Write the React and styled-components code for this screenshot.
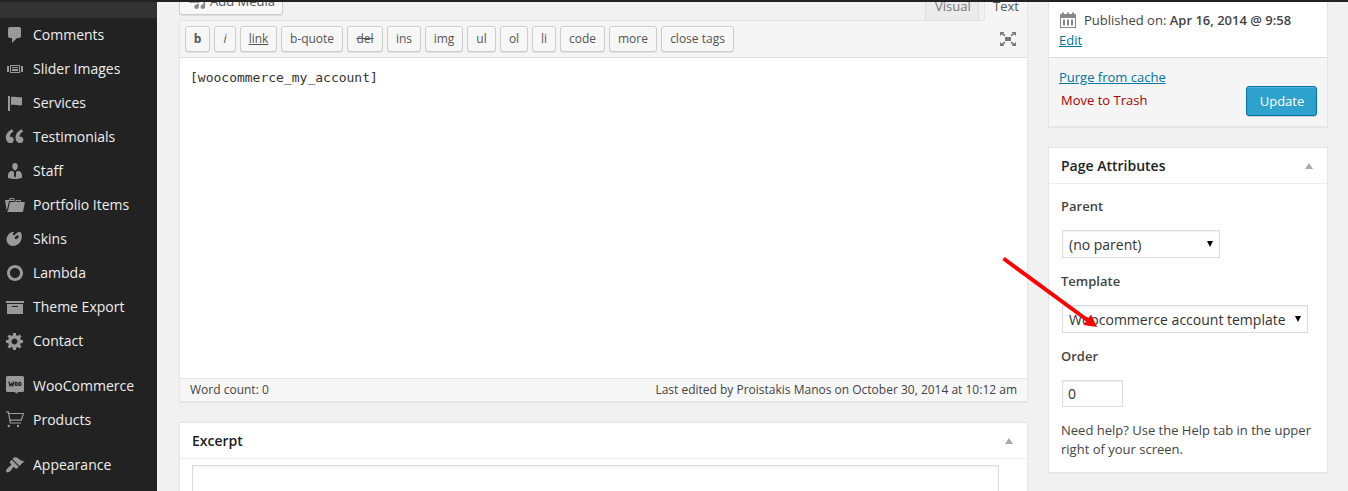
import React from "react";
import styled, { createGlobalStyle } from "styled-components";

const GlobalStyle = createGlobalStyle`
  *, *::before, *::after { box-sizing: border-box; }
  html, body { margin: 0; height: 491px; overflow: hidden; background: #f1f1f1; }
  body { font-family: "Open Sans", sans-serif; font-size: 13px; color: #444; }
`;

const Page = styled.div`
  display: flex;
  flex-direction: column;
  width: 1348px;
  height: 491px;
  overflow: hidden;
  position: relative;
`;
const AdminBar = styled.div`
  height: 2px;
  flex: none;
  background: #222;
`;
const Body = styled.div`
  display: flex;
  flex: 1;
  min-height: 0;
`;

/* Sidebar */
const Sidebar = styled.nav`
  width: 157px;
  flex: none;
  background: #222;
`;
const CurrentBand = styled.div`
  height: 16px;
  background: #333;
`;
const MenuItem = styled.a`
  display: flex;
  align-items: center;
  height: 34px;
  padding-left: 5px;
  gap: 8px;
  margin-top: ${(p) => (p.$gap ? 11 : 0)}px;
  font-size: 14px;
  line-height: 18px;
  color: #eee;
  white-space: nowrap;
`;
const Icon = styled.svg`
  display: block;
  flex: none;
  width: ${(p) => p.$size || 20}px;
  height: ${(p) => p.$size || 20}px;
  fill: ${(p) => p.$color || "#999"};
`;

/* Columns */
const Main = styled.main`
  width: 849px;
  margin-left: 22px;
  flex: none;
`;
const Side = styled.aside`
  width: 280px;
  margin-left: 20px;
  flex: none;
`;

/* Editor */
const EditorTools = styled.div`
  display: flex;
  align-items: flex-start;
  justify-content: space-between;
  height: 18px;
`;
const Clip = styled.div`
  display: flex;
  align-items: flex-end;
  height: 14px;
  overflow: hidden;
`;
const MediaButton = styled.button`
  display: flex;
  flex: none;
  align-items: center;
  gap: 4px;
  width: 104px;
  height: 28px;
  margin-bottom: 1px;
  padding: 0 0 0 8px;
  border: 1px solid #ccc;
  border-radius: 3px;
  background: #f7f7f7;
  box-shadow: inset 0 1px 0 #fff, 0 1px 0 rgba(0, 0, 0, 0.08);
  font: 13px/26px "Open Sans", sans-serif;
  color: #555;
  white-space: nowrap;
`;
const Tabs = styled.div`
  display: flex;
  align-items: flex-end;
  gap: 5px;
  height: 19px;
  overflow: hidden;
  position: relative;
`;
const Tab = styled.div`
  flex: none;
  width: ${(p) => p.$w}px;
  height: 29px;
  padding: 3px 0 0 ${(p) => (p.$active ? 8 : 9)}px;
  border: 1px solid ${(p) => (p.$active ? "#e5e5e5" : "#dedede")};
  border-bottom-color: ${(p) => (p.$active ? "#f5f5f5" : "#dedede")};
  background: ${(p) => (p.$active ? "#f5f5f5" : "#ebebeb")};
  color: ${(p) => (p.$active ? "#555" : "#777")};
  font-size: 13px;
  line-height: 20px;
`;
const Editor = styled.section`
  border: 1px solid #e5e5e5;
  height: 382px;
  display: flex;
  flex-direction: column;
  background: #fff;
  box-shadow: 0 1px 1px rgba(0, 0, 0, 0.04);
`;
const Toolbar = styled.div`
  display: flex;
  gap: 4px;
  height: 37px;
  padding: 5px 9px 0 5px;
  background: #f5f5f5;
  border-bottom: 1px solid #dedede;
`;
const TagButton = styled.button`
  width: ${(p) => p.$w}px;
  height: 26px;
  padding: 0;
  border: 1px solid #ccc;
  border-radius: 3px;
  background: #f7f7f7;
  box-shadow: inset 0 1px 0 #fff, 0 1px 0 rgba(0, 0, 0, 0.08);
  font-family: "Open Sans", sans-serif;
  font-size: 12px;
  line-height: 24px;
  color: #555;
  white-space: nowrap;
  font-weight: ${(p) => (p.$kind === "bold" ? 700 : 400)};
  font-style: ${(p) => (p.$kind === "italic" ? "italic" : "normal")};
  text-decoration: ${(p) =>
    p.$kind === "link" ? "underline" : p.$kind === "del" ? "line-through" : "none"};
`;
const Expand = styled.span`
  margin: 3px 0 0 auto;
`;
const CodeArea = styled.div`
  flex: 1;
  padding: 10px;
  font: 13px/20px "DejaVu Sans Mono", monospace;
  color: #333;
`;
const StatusBar = styled.div`
  display: flex;
  justify-content: space-between;
  height: 23px;
  padding: 0 10px;
  border-top: 1px solid #e5e5e5;
  background: #f7f7f7;
  font-size: 12px;
  line-height: 22px;
  color: #444;
`;

/* Panels */
const Panel = styled.section`
  margin-top: ${(p) => p.$mt || 0}px;
  height: ${(p) => p.$h}px;
  border: 1px solid #e5e5e5;
  border-top-width: ${(p) => (p.$cut ? 0 : 1)}px;
  background: #fff;
  box-shadow: 0 1px 1px rgba(0, 0, 0, 0.04);
`;
const PanelHead = styled.header`
  display: flex;
  align-items: center;
  justify-content: space-between;
  height: 36px;
  padding: 0 14px 0 12px;
  border-bottom: 1px solid #eee;
`;
const PanelTitle = styled.h3`
  margin: 0;
  font-size: 14px;
  line-height: 20px;
  font-weight: 600;
  color: #222;
`;
const Toggle = styled.span`
  margin-top: 1px;
  border: 4px solid transparent;
  border-top: 0;
  border-bottom: 6px solid #aaa;
`;
const ExcerptBox = styled.div`
  width: 807px;
  height: 60px;
  margin: 6px 0 0 12px;
  border: 1px solid #ddd;
  box-shadow: inset 0 1px 2px rgba(0, 0, 0, 0.07);
`;
const PublishInfo = styled.div`
  height: 56px;
  padding: 8px 0 0 10px;
  border-bottom: 1px solid #ddd;
  line-height: 20px;
`;
const Stamp = styled.div`
  display: flex;
  align-items: center;
  gap: 6px;
  height: 20px;
  margin-left: -1px;
  white-space: pre;
`;
const Strong = styled.b`
  font-weight: 600;
`;
const Link = styled.a`
  color: #0074a2;
  text-decoration: underline;
`;
const PublishActions = styled.div`
  display: flex;
  justify-content: space-between;
  height: 68px;
  padding: 9px 10px 0 10px;
  background: #f5f5f5;
`;
const ActionLinks = styled.div`
  display: flex;
  flex-direction: column;
  gap: 3px;
  line-height: 20px;
`;
const Trash = styled.a`
  margin-left: 2px;
  color: #a00;
`;
const Update = styled.button`
  width: 71px;
  height: 30px;
  margin-top: 19px;
  padding: 0 0 0 1px;
  border: 1px solid #0074a2;
  border-radius: 3px;
  background: #2ea2cc;
  box-shadow: inset 0 1px 0 rgba(120, 200, 230, 0.5), 0 1px 0 rgba(0, 0, 0, 0.15);
  font: 13px/28px "Open Sans", sans-serif;
  color: #fff;
`;
const Fields = styled.div`
  padding: 12px 12px 0;
`;
const Label = styled.div`
  height: 20px;
  line-height: 20px;
  font-weight: 600;
  margin-bottom: 14px;
`;
const Select = styled.div`
  display: flex;
  align-items: center;
  justify-content: space-between;
  width: ${(p) => p.$w}px;
  height: 28px;
  margin: 0 0 13px 1px;
  padding: 1px 6px 0;
  border: 1px solid #ddd;
  background: #fff;
  box-shadow: inset 0 1px 2px rgba(0, 0, 0, 0.07);
  font-size: 14px;
  line-height: 27px;
  color: #333;
  white-space: nowrap;
`;
const Caret = styled.i`
  margin-bottom: 2px;
  border: 3.5px solid transparent;
  border-bottom: 0;
  border-top: 6px solid #000;
`;
const OrderInput = styled.div`
  width: 61px;
  height: 27px;
  margin-left: 1px;
  padding-left: 5px;
  border: 1px solid #ddd;
  box-shadow: inset 0 1px 2px rgba(0, 0, 0, 0.07);
  font-size: 14px;
  line-height: 26px;
  color: #333;
`;
const Help = styled.p`
  margin: 14px 0 0;
  line-height: 19px;
  white-space: nowrap;
`;
const Pointer = styled.svg`
  position: absolute;
  left: 998px;
  top: 252px;
  width: 104px;
  height: 80px;
`;

const MENU = [
  { label: "Comments", d: "M5 2h9c1.1 0 2 .9 2 2v7c0 1.1-.9 2-2 2h-2l-5 5v-5H5c-1.1 0-2-.9-2-2V4c0-1.1.9-2 2-2z" },
  { label: "Slider Images", d: "M5 14V6h10v8H5zm-3-1V7h2v6H2zm4-6v6h8V7H6zm10 0h2v6h-2V7zm-3 2V8H7v1h6zm0 3v-2H7v2h6z" },
  { label: "Services", d: "M5 18V3H3v15h2zm1-6V4c3-1 7 1 11 0v8c-3 1.27-8-1-11 0z" },
  {
    label: "Testimonials",
    transform: "translate(-2.6 -2.2) scale(1.2 1.14)",
    d: "M9.49 13.22c0-.74-.2-1.38-.61-1.9-.62-.78-1.83-.88-2.53-.72-.29-1.65 1.11-3.75 2.92-4.65L7.88 4c-2.73 1.3-5.42 4.28-4.96 8.05C3.21 14.43 4.59 16 6.54 16c.85 0 1.56-.25 2.12-.75s.83-1.18.83-2.03zm8.05 0c0-.74-.2-1.38-.61-1.9-.63-.78-1.83-.88-2.53-.72-.29-1.65 1.11-3.75 2.92-4.65L15.93 4c-2.73 1.3-5.41 4.28-4.95 8.05.29 2.38 1.66 3.95 3.61 3.95.85 0 1.56-.25 2.12-.75s.83-1.18.83-2.03z",
  },
  {
    label: "Staff",
    d: "M7.3 6l-.03-.19c-.04-.37-.05-.73-.03-1.08.02-.36.1-.71.25-1.04.14-.32.31-.61.52-.86s.49-.46.83-.6c.34-.15.72-.23 1.13-.23.69 0 1.26.2 1.71.59s.76.87.91 1.44.18 1.16.09 1.78l-.03.19c-.01.09-.05.25-.11.48-.05.24-.12.47-.2.69-.08.21-.19.45-.34.72-.14.27-.3.49-.47.69-.18.19-.4.34-.67.48-.27.13-.55.19-.86.19s-.59-.06-.87-.19c-.26-.13-.49-.29-.67-.5-.18-.2-.34-.42-.49-.66-.15-.25-.26-.49-.34-.73-.09-.25-.16-.47-.21-.67-.06-.21-.1-.37-.12-.5zm9.2 6.24c.41.7.5 1.41.5 2.14v2.49c0 .03-.12.08-.29.13-.18.04-.42.13-.97.27-.55.12-1.1.24-1.65.34s-1.19.19-1.95.27c-.75.08-1.46.12-2.13.12-.68 0-1.39-.04-2.14-.12-.75-.07-1.4-.17-1.98-.27-.58-.11-1.08-.23-1.56-.34-.49-.11-.8-.21-1.06-.29L3 16.87v-2.49c0-.75.07-1.46.46-2.15s.81-1.25 1.5-1.68C5.66 10.12 7.19 10 8 10l1 1.67L9 15l1 2 1-2v-3.38L12 10c.77 0 2.34.15 3.04.55.7.41 1.04 1 1.46 1.69z",
  },
  {
    label: "Portfolio Items",
    d: "M4 5H.78c-.37 0-.74.32-.69.84l1.56 9.99S3.5 8.47 3.86 6.7c.11-.53.61-.7.98-.7H10s-.7-2.08-.77-2.31C9.11 3.25 8.89 3 8.45 3H5.14c-.36 0-.7.23-.8.64C4.25 4.04 4 5 4 5zm4.88 0h-4s.42-1 .87-1h2.13c.48 0 1 1 1 1zM2.67 16.25c-.31.47-.76.75-1.26.75h15.73c.54 0 .92-.31 1.03-.83.44-2.19 1.68-8.44 1.68-8.44.07-.5-.3-.73-.62-.73H16V5.53c0-.16-.26-.53-.66-.53h-3.76c-.52 0-.87.58-.87.58L10 7H5.59c-.32 0-.63.19-.69.5 0 0-1.59 6.7-1.72 7.33-.07.37-.22.99-.51 1.42zM15.38 7H11s.58-1 1.13-1h2.29c.71 0 .96 1 .96 1z",
  },
  {
    label: "Skins",
    d: "M8.55 3.06c1.01.34-1.95 2.01-.1 3.13 1.04.63 3.31-2.22 4.45-2.86.97-.54 2.67-.65 3.53 1.23 1.09 2.38.14 8.57-3.79 11.06-3.97 2.5-8.97 1.23-10.7-2.66-2.01-4.53 3.12-11.09 6.61-9.9zm1.21 6.45c.73 1.64 4.7-.5 3.79-2.8-.59-1.49-4.48 1.25-3.79 2.8z",
  },
  { label: "Lambda", d: "M10 2c4.42 0 8 3.58 8 8s-3.58 8-8 8-8-3.58-8-8 3.58-8 8-8zm0 13c2.76 0 5-2.24 5-5s-2.24-5-5-5-5 2.24-5 5 2.24 5 5 5z" },
  { label: "Theme Export", d: "M19 4v2H1V4h18zM2 7h16v10H2V7zm11 3V9H7v1h6z" },
  {
    label: "Contact",
    d: "M18 12h-2.18c-.17.7-.44 1.35-.81 1.93l1.54 1.54-2.1 2.1-1.54-1.54c-.58.36-1.23.63-1.91.79V19H8v-2.18c-.68-.16-1.33-.43-1.91-.79l-1.54 1.54-2.12-2.12 1.54-1.54c-.36-.58-.63-1.23-.79-1.91H1V9.03h2.17c.16-.7.44-1.35.8-1.94L2.43 5.55l2.1-2.1 1.54 1.54c.58-.37 1.24-.64 1.93-.81V2h3v2.18c.68.16 1.33.43 1.91.79l1.54-1.54 2.12 2.12-1.54 1.54c.36.59.64 1.24.8 1.94H18V12zm-8.5 1.5c1.66 0 3-1.34 3-3s-1.34-3-3-3-3 1.34-3 3 1.34 3 3 3z",
  },
  { label: "WooCommerce", gap: true, icon: "woo" },
  { label: "Products", icon: "cart" },
  {
    label: "Appearance",
    gap: true,
    d: "M14.48 11.06L7.41 3.99l1.5-1.5c.5-.56 2.3-.47 3.51.32 1.21.8 1.43 1.28 2.91 2.1 1.18.64 2.45 1.26 4.45.85zm-.71.71L6.7 4.7 4.93 6.47c-.39.39-.39 1.02 0 1.41l1.06 1.06c.39.39.39 1.03 0 1.42-.6.6-1.43 1.11-2.21 1.69-.35.26-.7.53-1.01.84C1.43 14.23.4 16.08 1.4 17.07c.99 1 2.84-.03 4.18-1.36.31-.31.58-.66.85-1.02.57-.78 1.08-1.61 1.69-2.21.39-.39 1.02-.39 1.41 0l1.06 1.06c.39.39 1.02.39 1.41 0z",
  },
];

function MenuIcon({ item }) {
  if (item.icon === "woo") {
    return (
      <Icon viewBox="0 0 20 20">
        <path d="M2.500 0h15a1.500 1.500 0 0 1 1.500 1.500v13a1.500 1.500 0 0 1-1.500 1.500H12.500v2L9.500 16h-7A1.500 1.500 0 0 1 1 14.500v-13A1.500 1.500 0 0 1 2.500 0z" />
        <g fill="none" stroke="#222" strokeWidth="1.2" strokeLinecap="round" strokeLinejoin="round">
          <path d="M4 5.8l1 4.400 1.600-3.200.9 3.200 1.400-4.400" />
          <ellipse cx="11.2" cy="8" rx="1.1" ry="1.700" />
          <ellipse cx="14.800" cy="8" rx="1.1" ry="1.700" />
        </g>
      </Icon>
    );
  }
  if (item.icon === "cart") {
    return (
      <Icon viewBox="0 0 20 20">
        <g fill="none" stroke="#999" strokeWidth="1.2">
          <path d="M1 1.800h2.300l2.100 11.200h10.600" />
          <path d="M3.700 3.500h14.700l-2.200 6.700H5" />
        </g>
        <circle cx="3.800" cy="16" r="1.200" />
        <circle cx="13" cy="16" r="1.200" />
      </Icon>
    );
  }
  return (
    <Icon viewBox="0 0 20 20">
      <path transform={item.transform} d={item.d} />
    </Icon>
  );
}

const TAGS = [
  ["b", 25, "bold"],
  ["i", 22, "italic"],
  ["link", 37, "link"],
  ["b-quote", 62],
  ["del", 36, "del"],
  ["ins", 34],
  ["img", 38],
  ["ul", 29],
  ["ol", 28],
  ["li", 24],
  ["code", 45],
  ["more", 48],
  ["close tags", 73],
];

export default function App() {
  return (
    <Page>
      <GlobalStyle />
      <AdminBar />
      <Body>
        <Sidebar>
          <CurrentBand />
          {MENU.map((item) => (
            <MenuItem key={item.label} $gap={item.gap}>
              <MenuIcon item={item} />
              {item.label}
            </MenuItem>
          ))}
        </Sidebar>

        <Main>
          <EditorTools>
            <Clip>
              <MediaButton>
                <Icon viewBox="0 0 20 20" $size={18} $color="#888">
                  <path d="M13 11V4c0-.55-.45-1-1-1h-1.67L9 1H5L3.67 3H2c-.55 0-1 .45-1 1v7c0 .55.45 1 1 1h10c.55 0 1-.45 1-1zM7 4.5c1.38 0 2.5 1.12 2.5 2.5S8.38 9.5 7 9.5 4.5 8.38 4.5 7 5.62 4.5 7 4.5zM14 6h5v10.5c0 1.38-1.12 2.5-2.5 2.5S14 17.88 14 16.5s1.12-2.5 2.5-2.5c.17 0 .34.02.5.05V9h-3V6zm-4 8.05V13h2v3.5c0 1.38-1.12 2.5-2.5 2.5S7 17.88 7 16.5 8.12 14 9.5 14c.17 0 .34.02.5.05z" />
                </Icon>
                Add Media
              </MediaButton>
            </Clip>
            <Tabs>
              <Tab $w={54}>Visual</Tab>
              <Tab $w={44} $active>Text</Tab>
            </Tabs>
          </EditorTools>
          <Editor>
            <Toolbar>
              {TAGS.map(([label, w, kind]) => (
                <TagButton key={label} $w={w} $kind={kind}>
                  {label}
                </TagButton>
              ))}
              <Expand>
                <Icon viewBox="0 0 20 20" $color="#777">
                  <path d="M7 8h6v4H7zM2 3h4.500L5.200 4.300l2.300 2-1.100 1.100-2.500-2.200L2 7zM18 3h-4.500l1.300 1.300-2.300 2 1.100 1.100 2.500-2.200L18 7zM2 17h4.500l-1.300-1.300 2.300-2-1.100-1.100-2.500 2.200L2 13zM18 17h-4.500l1.300-1.300-2.300-2 1.100-1.100 2.500 2.200L18 13z" />
                </Icon>
              </Expand>
            </Toolbar>
            <CodeArea>[woocommerce_my_account]</CodeArea>
            <StatusBar>
              <span>Word count: 0</span>
              <span>Last edited by Proistakis Manos on October 30, 2014 at 10:12 am</span>
            </StatusBar>
          </Editor>
          <Panel $mt={20} $h={90}>
            <PanelHead>
              <PanelTitle>Excerpt</PanelTitle>
              <Toggle />
            </PanelHead>
            <ExcerptBox />
          </Panel>
        </Main>

        <Side>
          <Panel $h={125} $cut>
            <PublishInfo>
              <Stamp>
                <Icon viewBox="0 0 20 20" $color="#888">
                  <path fillRule="evenodd" d="M2 4h2V2.500h2V4h3V2.500h2V4h3V2.500h2V4h2v14H2zM3 8v9h14V8zM5 9.500h2v6H5zM9 9.500h2v6H9zM13 9.500h2v6h-2z" />
                </Icon>
                <span>Published on: <Strong>Apr 16, 2014 @ 9:58</Strong></span>
              </Stamp>
              <Link>Edit</Link>
            </PublishInfo>
            <PublishActions>
              <ActionLinks>
                <Link>Purge from cache</Link>
                <Trash>Move to Trash</Trash>
              </ActionLinks>
              <Update>Update</Update>
            </PublishActions>
          </Panel>

          <Panel $mt={20} $h={326}>
            <PanelHead>
              <PanelTitle>Page Attributes</PanelTitle>
              <Toggle />
            </PanelHead>
            <Fields>
              <Label>Parent</Label>
              <Select $w={158}>
                (no parent)
                <Caret />
              </Select>
              <Label>Template</Label>
              <Select $w={246}>
                Woocommerce account template
                <Caret />
              </Select>
              <Label>Order</Label>
              <OrderInput>0</OrderInput>
              <Help>
                Need help? Use the Help tab in the upper
                <br />
                right of your screen.
              </Help>
            </Fields>
          </Panel>
        </Side>
      </Body>
      <Pointer viewBox="998 252 104 80">
        <path d="M1003.500 258.500L1090 322" stroke="#f00" strokeWidth="4" fill="none" />
        <path d="M1097 327L1083.500 325L1091 314.500Z" fill="#f00" />
      </Pointer>
    </Page>
  );
}
